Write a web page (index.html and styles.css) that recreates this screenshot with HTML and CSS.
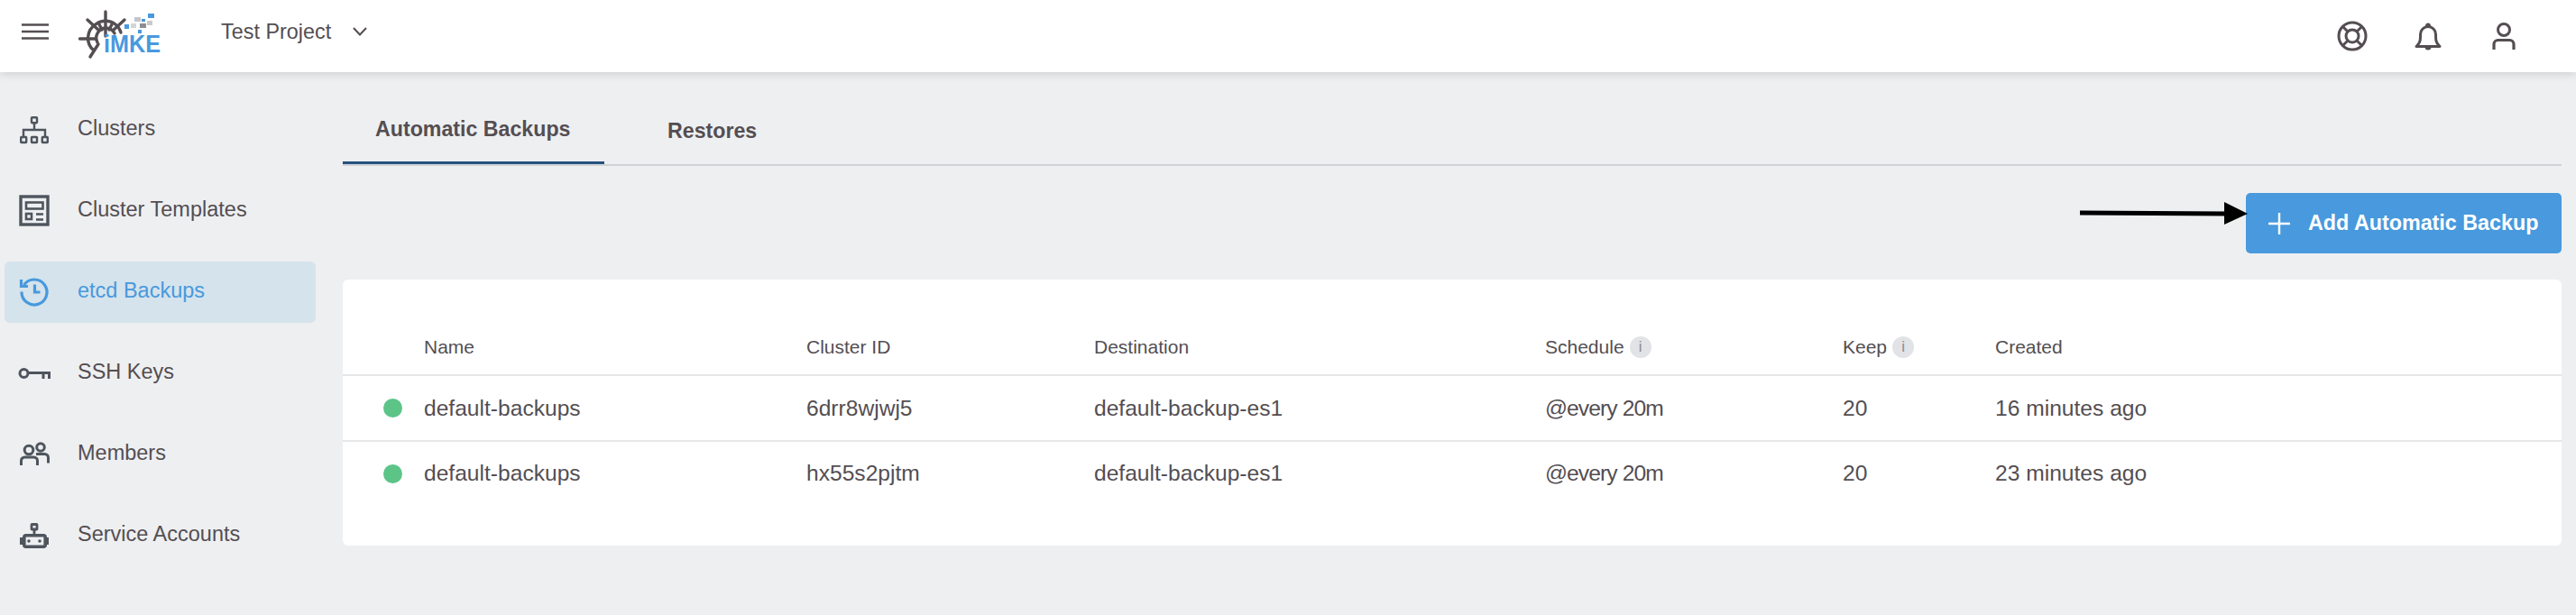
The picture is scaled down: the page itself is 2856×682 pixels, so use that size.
FILE: index.html
```html
<!DOCTYPE html>
<html lang="en">
<head>
<meta charset="utf-8">
<title>etcd Backups</title>
<link rel="stylesheet" href="styles.css">
</head>
<body>
<header class="topbar">
  <div class="topbar-left">
    <svg class="burger" viewBox="0 0 30 18" width="30" height="18"><path d="M0 1.500h30M0 9h30M0 16.500h30" fill="none" stroke="#544e52" stroke-width="2.600"/></svg>
    <svg class="logo" viewBox="88 10 92 56" width="92" height="56">
      <g fill="none" stroke="#544e52" stroke-width="3.400" stroke-linecap="round">
        <path d="M104 56 A18 18 0 0 1 106 27 A18 18 0 0 1 128 27 A18 18 0 0 1 134 36"/>
        <path d="M108 47 A11 11 0 0 1 117 31 A11 11 0 0 1 127 37"/>
        <path d="M117 13V40M97 22l13 12M138 22l-13 12M88.500 43h18M100 63l9-14M110 27l3 6M124 27l-3 6"/>
      </g>
      <g fill="#4899dd">
        <rect x="164" y="15" width="7" height="5"/><rect x="157" y="21" width="4" height="3"/>
        <rect x="138" y="27" width="5" height="5"/><rect x="153" y="33" width="4" height="4"/>
      </g>
      <rect x="149" y="19" width="7" height="5" fill="#c3c6ca"/>
      <rect x="163" y="23" width="6" height="5" fill="#c8cbce"/>
      <rect x="145" y="26" width="6" height="5" fill="#d3d5d8"/>
      <rect x="155" y="26" width="7" height="5" fill="#8b8e92"/>
      <text class="logo-text" x="115" y="58" textLength="63" lengthAdjust="spacingAndGlyphs">iMKE</text>
    </svg>
    <span class="project">Test Project</span>
    <svg class="chevron" viewBox="0 0 16 10" width="16" height="10"><path d="M1 1l7 7.500 7-7.500" fill="none" stroke="#544e52" stroke-width="2"/></svg>
  </div>
  <div class="topbar-right">
    <svg viewBox="0 0 36 36" width="36" height="36" fill="none" stroke="#544e52" stroke-width="3"><circle cx="18" cy="18" r="15"/><circle cx="18" cy="18" r="7"/><path d="M8 8l5 5M28 8l-5 5M8 28l5-5M28 28l-5-5" stroke-width="3"/></svg>
    <svg viewBox="0 0 36 36" width="36" height="36" fill="none" stroke="#544e52" stroke-width="3"><path d="M5 29.500c3-3 4.500-5 4.500-10.500v-3a8.500 8.500 0 0 1 17 0v3c0 5.500 1.500 7.500 4.500 10.500z" stroke-linejoin="round"/><path d="M15 7a3 3.500 0 0 1 6 0M14.500 30a3.500 3.500 0 0 0 7 0" fill="#544e52" stroke="none"/></svg>
    <svg viewBox="0 0 36 36" width="36" height="36" fill="none" stroke="#544e52" stroke-width="3"><circle cx="18" cy="11" r="6.500"/><path d="M7 33v-6a4.500 4.500 0 0 1 4.500-4.500h13A4.500 4.500 0 0 1 29 27v6" stroke-width="3.200"/></svg>
  </div>
</header>
<div class="layout">
  <nav class="sidebar">
    <a class="nav-item">
      <svg viewBox="0 0 36 36" width="36" height="36" fill="none" stroke="#4e555d" stroke-width="2.400"><rect x="15" y="4.200" width="6" height="6" rx=".6"/><path d="M18 10v8"/><path d="M6 25v-7h24v7"/><rect x="3.200" y="26" width="6" height="6" rx=".6"/><rect x="15" y="26" width="6" height="6" rx=".6"/><rect x="26.800" y="26" width="6" height="6" rx=".6"/></svg>
      <span>Clusters</span>
    </a>
    <a class="nav-item">
      <svg viewBox="0 0 36 36" width="36" height="36" fill="none" stroke="#4e555d" stroke-width="2.600"><rect x="3" y="2" width="30" height="31" stroke-width="3.400"/><rect x="9" y="8.500" width="18.500" height="7"/><rect x="9" y="21" width="6" height="6"/><path d="M20 21.500h8M20 27.500h8"/></svg>
      <span>Cluster Templates</span>
    </a>
    <a class="nav-item active">
      <svg viewBox="0 0 36 36" width="36" height="36" fill="none" stroke="#4899dd" stroke-width="3.200"><path d="M6.500 10A14 14 0 1 1 4 17.500"/><path d="M3.500 4v7.500h7.500"/><path d="M18.500 9.500v8.500h6"/></svg>
      <span>etcd Backups</span>
    </a>
    <a class="nav-item">
      <svg viewBox="0 0 36 36" width="36" height="36" fill="none" stroke="#4e555d" stroke-width="3"><circle cx="6.500" cy="18" r="4.500"/><path d="M11 17.500H36"/><path d="M28 18v6M34.500 18v6"/></svg>
      <span>SSH Keys</span>
    </a>
    <a class="nav-item">
      <svg viewBox="0 0 36 36" width="36" height="36" fill="none" stroke="#4e555d" stroke-width="3"><circle cx="12" cy="13" r="4.800"/><circle cx="25" cy="10" r="4.300"/><path d="M3.500 30v-5a4 4 0 0 1 4-4h10a4 4 0 0 1 4 4v5M20 17.500h9.500a4 4 0 0 1 4 4v6"/></svg>
      <span>Members</span>
    </a>
    <a class="nav-item">
      <svg viewBox="0 0 36 36" width="36" height="36" fill="none" stroke="#4e555d" stroke-width="2.800"><rect x="15" y="5.500" width="6" height="5.500" rx=".5"/><path d="M18 11v5"/><rect x="6.800" y="17.800" width="23.400" height="12.500" rx="2" stroke-width="3.600"/><path d="M3.500 20v8M32.500 20v8" stroke-width="3"/><circle cx="12" cy="24" r="1.800" fill="#4e555d" stroke="none"/><circle cx="24" cy="24" r="1.800" fill="#4e555d" stroke="none"/></svg>
      <span>Service Accounts</span>
    </a>
  </nav>
  <main class="content">
    <div class="tabs">
      <div class="tab tab-active">Automatic Backups</div>
      <div class="tab tab-second">Restores</div>
    </div>
    <div class="actions">
      <svg class="arrow" viewBox="0 0 186 26" width="186" height="26"><path d="M0 12L162 13" fill="none" stroke="#000" stroke-width="5"/><path d="M160 0l26 13-26 12z" fill="#000"/></svg>
      <button class="add-btn">
        <svg viewBox="0 0 24 24" width="24" height="24"><path d="M12 0v24M0 12h24" fill="none" stroke="#fff" stroke-width="2.400"/></svg>
        <span>Add Automatic Backup</span>
      </button>
    </div>
    <section class="card">
      <div class="row row-head">
        <div></div>
        <div>Name</div>
        <div>Cluster ID</div>
        <div>Destination</div>
        <div class="with-info">Schedule <span class="info">i</span></div>
        <div class="with-info">Keep <span class="info">i</span></div>
        <div>Created</div>
      </div>
      <div class="row row-body">
        <div class="dot"></div>
        <div>default-backups</div>
        <div>6drr8wjwj5</div>
        <div>default-backup-es1</div>
        <div class="schedule">@every 20m</div>
        <div>20</div>
        <div>16 minutes ago</div>
      </div>
      <div class="row row-body">
        <div class="dot"></div>
        <div>default-backups</div>
        <div>hx55s2pjtm</div>
        <div>default-backup-es1</div>
        <div class="schedule">@every 20m</div>
        <div>20</div>
        <div>23 minutes ago</div>
      </div>
    </section>
  </main>
</div>
</body>
</html>
```
FILE: styles.css
```css
* { box-sizing: border-box; }
html, body { margin: 0; height: 682px; overflow: hidden; }
body {
  background: #eeeff1;
  color: #544e52;
  font-family: "Liberation Sans", Arial, sans-serif;
}
.topbar {
  height: 80px;
  background: #fff;
  display: flex;
  align-items: center;
  justify-content: space-between;
  box-shadow: 0 1px 10px rgba(0, 0, 0, 0.16);
  position: relative;
}
.topbar-left { display: flex; align-items: center; padding-left: 24px; }
.burger { display: block; margin-top: -11px; }
.logo { display: block; margin-left: 34px; margin-top: -4px; overflow: visible; }
.logo-text { font: 700 27px "Liberation Sans", Arial, sans-serif; fill: #4899dd; }
.project { font-size: 23.4px; margin-left: 65px; margin-top: -10px; }
.chevron { margin-left: 24px; margin-top: -10px; }
.topbar-right { display: flex; gap: 48px; padding-right: 62px; }
.topbar-right svg { display: block; }
.layout { display: flex; }
.sidebar {
  width: 380px;
  flex: none;
  padding: 30px 30px 0 5px;
  display: flex;
  flex-direction: column;
  gap: 22px;
}
.nav-item {
  height: 68px;
  border-radius: 6px;
  display: flex;
  align-items: center;
  gap: 30px;
  padding-left: 15px;
  font-size: 23.5px;
}
.nav-item svg { flex: none; display: block; }
.nav-item span { margin-bottom: 3px; }
.nav-item.active { background: #d5e3ec; color: #4899dd; }
.content { flex: 1; padding-right: 16px; min-width: 0; }
.tabs {
  display: flex;
  height: 104px;
  padding-top: 28px;
  border-bottom: 2px solid #cfd2d6;
}
.tab {
  height: 74px;
  padding-top: 3px;
  padding-bottom: 3px;
  display: flex;
  align-items: center;
  font-size: 23.2px;
  font-weight: 700;
}
.tab-active {
  width: 290px;
  padding-left: 36px;
  border-bottom: 3px solid #24517f;
}
.tab-second { padding-left: 70px; }
.actions {
  display: flex;
  justify-content: flex-end;
  margin-top: 30px;
  position: relative;
}
.arrow { position: absolute; right: 348px; top: 10px; z-index: 1; }
.add-btn {
  width: 350px;
  height: 67px;
  border: 0;
  border-radius: 5px;
  background: #4899dd;
  color: #fff;
  font: 700 23.3px "Liberation Sans", Arial, sans-serif;
  display: flex;
  align-items: center;
  gap: 20px;
  padding: 0 0 0 25px;
}
.add-btn svg { display: block; flex: none; }
.card {
  margin-top: 29px;
  height: 295px;
  background: #fff;
  border-radius: 6px;
  padding-top: 44px;
}
.row {
  display: grid;
  grid-template-columns: 90px 424px 319px 500px 330px 169px 1fr;
  align-items: center;
}
.row-head {
  height: 63px;
  font-size: 21px;
  border-bottom: 2px solid #e6e7e9;
}
.row-body {
  height: 71px;
  font-size: 24.6px;
}
.row-body + .row-body { height: 72px; border-top: 2px solid #e6e7e9; }
.schedule { letter-spacing: -0.9px; }
.dot {
  width: 21px;
  height: 21px;
  border-radius: 50%;
  background: #5dc488;
  margin-left: 45px;
}
.with-info { display: flex; align-items: center; gap: 6px; }
.info {
  width: 24px;
  height: 24px;
  border-radius: 50%;
  background: #e1e3e6;
  color: #888d94;
  font-size: 17px;
  display: flex;
  align-items: center;
  justify-content: center;
}
```
